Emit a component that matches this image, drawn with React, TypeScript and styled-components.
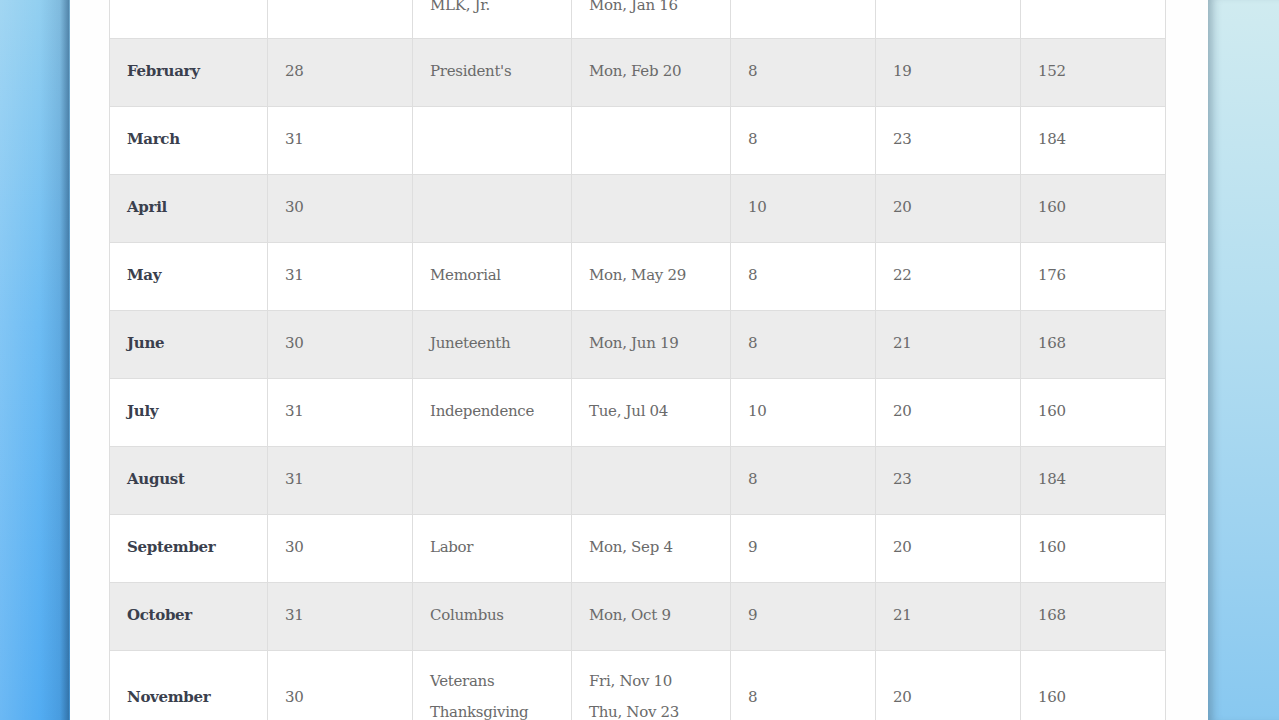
import React from "react";
import styled, { createGlobalStyle } from "styled-components";

const Global = createGlobalStyle`
  html, body { margin: 0; padding: 0; height: 100%; overflow: hidden; }
  body {
    background:
      linear-gradient(90deg, rgba(255,255,255,0.15) 0px, rgba(255,255,255,0) 40px, rgba(0,40,90,0.12) 60px, rgba(20,60,100,0.5) 69px, rgba(0,0,0,0) 70px),
      linear-gradient(180deg, #92cff0 0%, #6dbcf3 45%, #52acf2 100%);
    font-family: "DejaVu Serif", Georgia, serif;
  }
  #root { height: 100%; }
`;

const Page = styled.div`
  height: 720px;
  display: flex;
`;

const LeftEdge = styled.div`
  width: 70px;
  flex: 0 0 70px;
`;

const RightEdge = styled.div`
  flex: 1;
  background: linear-gradient(180deg, #d0ebf0 0%, #b6dff0 40%, #9dd2f0 75%, #88c8f0 100%);
  box-shadow: inset 10px 0 10px -6px rgba(70, 100, 120, 0.45);
`;

const Card = styled.div`
  width: 1138px;
  flex: 0 0 1138px;
  background: #fefefe;
  padding: 0 43px 0 39px;
  box-sizing: border-box;
  overflow: hidden;
`;

const Table = styled.table`
  border-collapse: collapse;
  table-layout: fixed;
  width: 1056px;
  margin-top: -57px;
`;

const Row = styled.tr<{ $shaded: boolean }>`
  height: 68px;
  background: ${(p) => (p.$shaded ? "#ececec" : "#ffffff")};
`;

const Cell = styled.td<{ $w: number; $month?: boolean }>`
  width: ${(p) => p.$w}px;
  border: 1px solid #dedede;
  padding: 15px 10px 17px 17px;
  line-height: 31px;
  font-size: 15px;
  letter-spacing: -0.3px;
  vertical-align: middle;
  color: ${(p) => (p.$month ? "#3a3f4d" : "#6a6a6a")};
  font-weight: ${(p) => (p.$month ? 600 : 400)};
  white-space: nowrap;
  box-sizing: border-box;
`;

const widths = [158, 145, 159, 159, 145, 145, 145];

type R = [string, string, string[], string[], string, string, string];

const rows: R[] = [
  ["January", "31", ["New Year's", "MLK, Jr."], ["Mon, Jan 2", "Mon, Jan 16"], "9", "20", "160"],
  ["February", "28", ["President's"], ["Mon, Feb 20"], "8", "19", "152"],
  ["March", "31", [], [], "8", "23", "184"],
  ["April", "30", [], [], "10", "20", "160"],
  ["May", "31", ["Memorial"], ["Mon, May 29"], "8", "22", "176"],
  ["June", "30", ["Juneteenth"], ["Mon, Jun 19"], "8", "21", "168"],
  ["July", "31", ["Independence"], ["Tue, Jul 04"], "10", "20", "160"],
  ["August", "31", [], [], "8", "23", "184"],
  ["September", "30", ["Labor"], ["Mon, Sep 4"], "9", "20", "160"],
  ["October", "31", ["Columbus"], ["Mon, Oct 9"], "9", "21", "168"],
  ["November", "30", ["Veterans", "Thanksgiving"], ["Fri, Nov 10", "Thu, Nov 23"], "8", "20", "160"],
  ["December", "31", ["Christmas"], ["Mon, Dec 25"], "10", "20", "160"],
];

const Lines = ({ items }: { items: string[] }) => (
  <>
    {items.map((t, i) => (
      <div key={i}>{t}</div>
    ))}
  </>
);

export default function App() {
  return (
    <>
      <Global />
      <Page>
        <LeftEdge />
        <Card>
          <Table>
            <tbody>
              {rows.map((r, i) => (
                <Row key={r[0]} $shaded={i % 2 === 1}>
                  <Cell $w={widths[0]} $month>{r[0]}</Cell>
                  <Cell $w={widths[1]}>{r[1]}</Cell>
                  <Cell $w={widths[2]}><Lines items={r[2]} /></Cell>
                  <Cell $w={widths[3]}><Lines items={r[3]} /></Cell>
                  <Cell $w={widths[4]}>{r[4]}</Cell>
                  <Cell $w={widths[5]}>{r[5]}</Cell>
                  <Cell $w={widths[6]}>{r[6]}</Cell>
                </Row>
              ))}
            </tbody>
          </Table>
        </Card>
        <RightEdge />
      </Page>
    </>
  );
}
